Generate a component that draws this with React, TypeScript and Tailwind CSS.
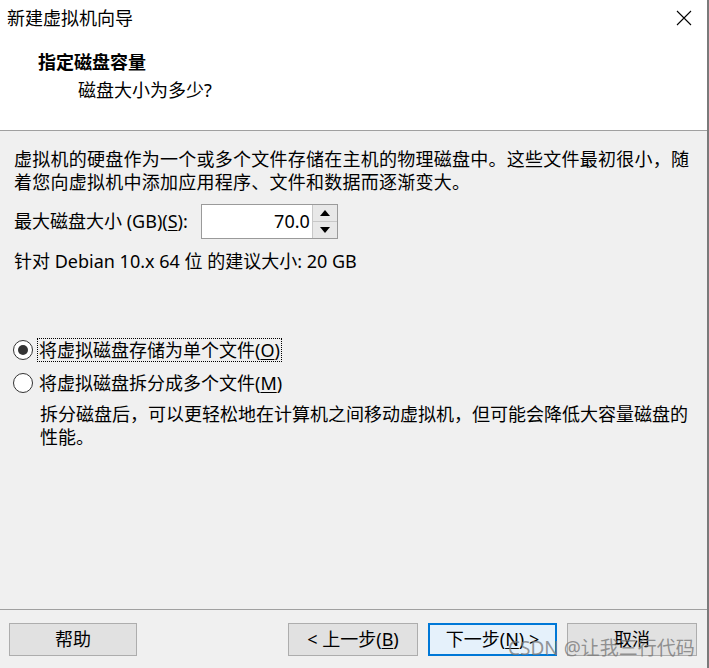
import React from "react";

const font = { fontFamily: '"Noto Sans", "Noto Sans CJK SC", sans-serif' };

function Btn({ children, primary, className = "" }: { children: React.ReactNode; primary?: boolean; className?: string }) {
  return (
    <div
      className={
        "h-[33px] flex items-center justify-center text-[18px] leading-[23px] text-black " +
        (primary
          ? "bg-[#e5f1fb] border border-[#0078d7] shadow-[inset_0_0_0_1px_#0078d7] "
          : "bg-[#e1e1e1] border border-[#adadad] ") +
        className
      }
    >
      {children}
    </div>
  );
}

function Radio({ checked }: { checked?: boolean }) {
  return (
    <div className="w-[20px] h-[20px] rounded-full border-[1.5px] border-[#333] bg-white flex items-center justify-center shrink-0">
      {checked && <div className="w-[10px] h-[10px] rounded-full bg-[#333]" />}
    </div>
  );
}

export default function App() {
  return (
    <div style={font} className="relative w-[709px] h-[668px] bg-[#f0f0f0] flex flex-col text-black border-r-2 border-[#7a7a7a] overflow-hidden">
      {/* Header */}
      <div className="bg-white h-[131px] border-b border-[#a0a0a0] flex flex-col shrink-0">
        <div className="h-[36px] flex items-center pl-[7px] pr-[15px]">
          <span className="text-[18px] leading-[23px]">新建虚拟机向导</span>
          <svg className="ml-auto" width="16" height="16" viewBox="0 0 16 16">
            <path d="M1 1 L15 15 M15 1 L1 15" stroke="#000" strokeWidth="1.1" fill="none" />
          </svg>
        </div>
        <div className="mt-[15px] pl-[38px] text-[18px] leading-[23px] font-bold">指定磁盘容量</div>
        <div className="mt-[5px] pl-[78px] text-[18px] leading-[23px]">磁盘大小为多少?</div>
      </div>

      {/* Body */}
      <div className="flex-1 flex flex-col pl-[14px] pr-[10px]">
        <div className="mt-[17px] text-[18px] leading-[23px] tracking-[0.25px] whitespace-nowrap">
          <div>虚拟机的硬盘作为一个或多个文件存储在主机的物理磁盘中。这些文件最初很小，随</div>
          <div>着您向虚拟机中添加应用程序、文件和数据而逐渐变大。</div>
        </div>

        <div className="mt-[10px] flex items-center">
          <span className="text-[18px] leading-[23px]">
            最大磁盘大小 (GB)(<span className="underline underline-offset-2">S</span>):
          </span>
          <div className="ml-[13px] flex h-[35px] w-[137px] border border-[#9a9a9a] bg-white">
            <div className="flex-1 flex items-center justify-end pr-[2px] text-[18px]">70.0</div>
            <div className="w-[25px] flex flex-col border-l border-[#c8c8c8]">
              <div className="flex-1 bg-[#e8e8e8] border-b border-[#c8c8c8] flex items-center justify-center">
                <svg width="10" height="6" viewBox="0 0 10 6"><path d="M5 0 L10 6 L0 6 Z" fill="#000" /></svg>
              </div>
              <div className="flex-1 bg-[#e8e8e8] flex items-center justify-center">
                <svg width="10" height="6" viewBox="0 0 10 6"><path d="M0 0 L10 0 L5 6 Z" fill="#000" /></svg>
              </div>
            </div>
          </div>
        </div>

        <div className="mt-[11px] text-[18px] leading-[23px]">针对 Debian 10.x 64 位 的建议大小: 20 GB</div>

        <div className="mt-[65px] flex items-center h-[24px] -ml-[1px]">
          <Radio checked />
          <span className="ml-[4px] px-[1px] text-[18px] leading-[22px] border border-dotted border-black">
            将虚拟磁盘存储为单个文件(<span className="underline underline-offset-2">O</span>)
          </span>
        </div>

        <div className="mt-[9px] flex items-center h-[24px] -ml-[1px]">
          <Radio />
          <span className="ml-[5px] px-[1px] text-[18px] leading-[22px]">
            将虚拟磁盘拆分成多个文件(<span className="underline underline-offset-2">M</span>)
          </span>
        </div>

        <div className="mt-[8px] pl-[26px] text-[18px] leading-[23px] whitespace-nowrap">
          <div>拆分磁盘后，可以更轻松地在计算机之间移动虚拟机，但可能会降低大容量磁盘的</div>
          <div>性能。</div>
        </div>
      </div>

      {/* Footer */}
      <div className="h-[59px] border-t border-[#a0a0a0] shrink-0 flex items-start pt-[13px] pl-[9px] pr-[10px]">
        <Btn className="w-[128px]">帮助</Btn>
        <div className="ml-auto flex gap-[10px]">
          <Btn className="w-[130px]">
            &lt; 上一步(<span className="underline underline-offset-2">B</span>)
          </Btn>
          <Btn primary className="w-[129px]">
            下一步(<span className="underline underline-offset-2">N</span>) &gt;
          </Btn>
          <Btn className="w-[130px]">取消</Btn>
        </div>
      </div>

      {/* Watermark */}
      <div className="absolute left-[508px] top-[636px] text-[19px] leading-[24px] text-[#7a7a7a]/80 whitespace-nowrap pointer-events-none">
        CSDN @让我三行代码
      </div>
    </div>
  );
}
